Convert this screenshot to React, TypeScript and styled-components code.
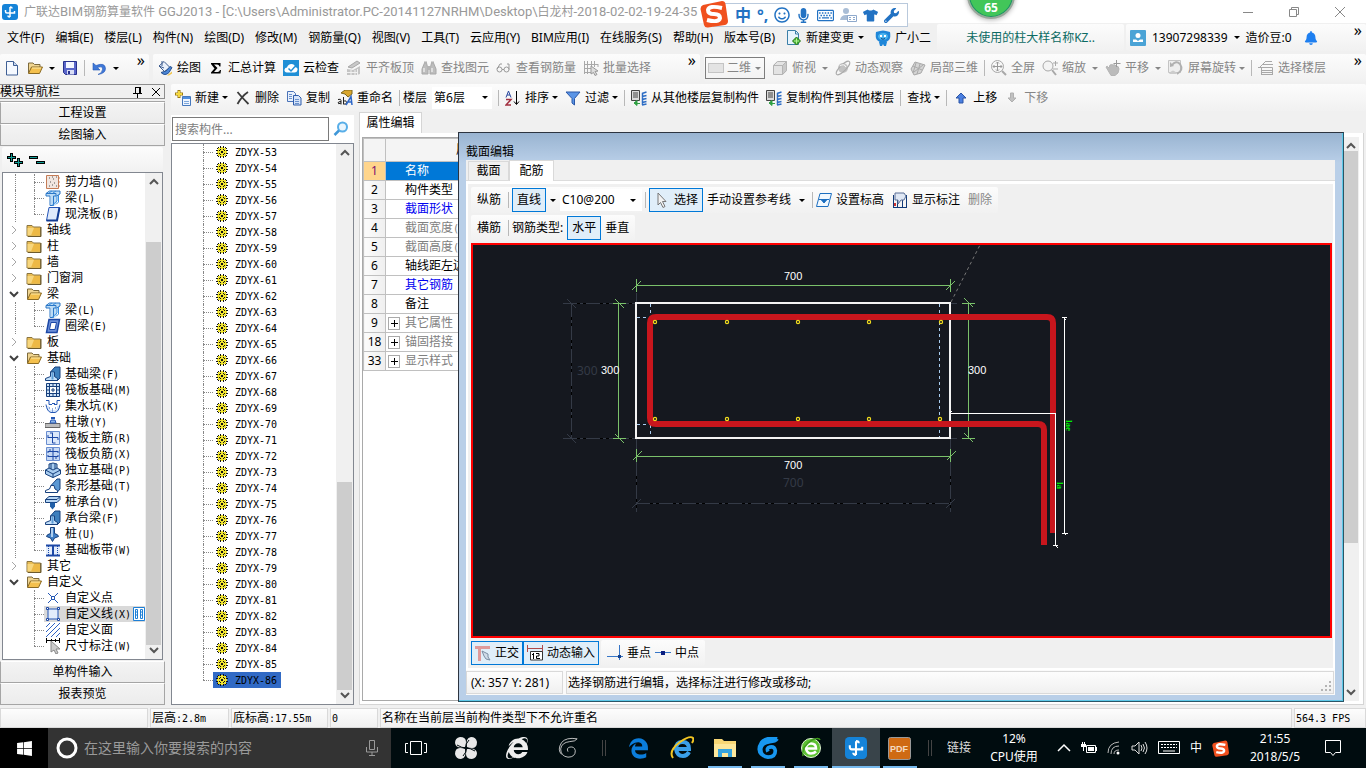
import React from "react";
import styled, { createGlobalStyle, css } from "styled-components";
import {
  FaBell,
  FaEdgeLegacy,
  FaInternetExplorer,
  FaMicrophone,
  FaRegKeyboard,
  FaRegSmile,
  FaTshirt,
  FaWindows,
  FaWrench,
} from "react-icons/fa";

const uiFont = `"Noto Sans", "Noto Sans CJK SC", sans-serif`;

const GlobalStyle = createGlobalStyle`
  * { box-sizing: border-box; }
  body { margin: 0; background: #f0f0f0; font: 12px/16px ${uiFont}; color: #000; }
  button, input, select { font: inherit; color: inherit; margin: 0; padding: 0; border: 0; border-radius: 0; background: none; }
  ul { list-style: none; margin: 0; padding: 0; }
  svg { display: block; flex: none; }
`;

/* ---------- icons ---------- */

const dark = "#17407d";
const gray = "#a8a8a8";
const sketch = { fill: "none", strokeWidth: 1 };

const icons: Record<string, React.ReactNode> = {
  folderClosed: (
    <>
      <path d="M1 3.500h5l1.500 1.500H14.500v9H1z" fill="#e9bd55" stroke="#8a7440" />
      <path d="M1.500 6h12.500v7.500H1.500z" fill="#f7d67d" />
      <path d="M8 6h6v7.500H5z" fill="#edb945" />
      <path d="M15 5v9.500H2" stroke="#6d5a2c" {...sketch} />
    </>
  ),
  folderOpen: (
    <>
      <path d="M1.500 13V3h4.500l1.500 1.500h5.500V7" fill="#f0d591" stroke="#7d6a3c" />
      <path d="M1.500 13.500L4.500 7h11l-3 6.500z" fill="#f4c04d" stroke="#8a6a24" />
      <path d="M5 8h9" stroke="#fde9a8" />
    </>
  ),
  beam: (
    <>
      <path d="M1 3.500L4 1h11v3l-3 2v8l-2 1.500H6V6H1z" fill="#bcdcf6" />
      <path d="M1 3.500h10V6H8.500v9.500H5V6H1zM1 3.500L4.500 1H15v3l-3.500 2" stroke="#2a76c6" {...sketch} />
      <path d="M7 15.500L12 11V5.500M4 3l3-2M8 3l3-2M11.500 14l2-2V5" stroke="#3b8fe0" {...sketch} />
    </>
  ),
  foundation: (
    <>
      <path d="M5.500 6L10 1h5v11l-3 3z" fill="#3d7fbd" stroke={dark} />
      <path d="M.5 14.500v-2l5-2V6h4v4.500l3 2v2z" fill="#c3e0fa" stroke={dark} />
      <path d="M7.500 6.500v7" stroke="#5d9cd6" strokeWidth={2} />
    </>
  ),
  app: (
    <>
      <rect width="16" height="16" rx="3" fill="#1583d8" />
      <path d="M8 3v10M3.500 6v1.500q0 1.500 1.500 1.500h7.500V7M10 4.500Q10 3 8 3M6 11.500Q6 13 8 13" fill="none" stroke="#fff" strokeWidth={1.500} />
    </>
  ),
  newDoc: (
    <>
      <path d="M2.500 1.500h7l4 4v9.500h-11z" fill="#f5f9ff" stroke="#3f5f94" />
      <path d="M9.500 1.500v4h4" stroke="#3f5f94" fill="#c9d8ef" />
    </>
  ),
  save: (
    <>
      <path d="M1.500 1.500h13v13h-11l-2-2z" fill="#5a66c9" stroke="#27308c" />
      <path d="M4 2h8v6H4z" fill="#f4f6ff" />
      <path d="M5 10h7v4.500H5z" fill="#d9def5" />
      <path d="M6 11h2v3H6z" fill="#27308c" />
    </>
  ),
  undo: <path d="M2 3v7h7L6.500 7.500Q12 5.500 11.500 9.500T7 14.500Q14.500 13.500 14.500 8.500 14 2 5 5.500z" fill="#3f78d8" stroke="#2458b5" strokeWidth={0.600} />,
  paint: (
    <>
      <path d="M2 6L7 1.500l6 6-5.500 4z" fill="#eaf1fb" stroke="#3d5c8f" />
      <path d="M5 1v5M2 6l5 2" stroke="#3d5c8f" {...sketch} />
      <path d="M4 12.500q4 4 8 0l3-5-2-1-4 4.500z" fill="#4a86d8" stroke="#28528f" />
      <path d="M10 15.500l5-4v2l-3 2z" fill="#f2c44b" />
    </>
  ),
  sigma: <path d="M3 3h9.500v3.500h-1Q11 4.500 9 4.500H6L9.500 8 6 12h3.500q2 0 2.500-2h1l-.5 3.500H3v-1L6.500 8.500 3 4z" fill="#000" />,
  cloudCheck: (
    <>
      <rect width="16" height="16" fill="#1f8fd6" />
      <path d="M4 12.500Q1 12 1.500 9.500 2 7.500 4 7.500 5 4 8.500 4q3 0 3.500 3 3 .5 2.500 3-.5 2.500-3 2.500z" fill="#fff" />
      <path d="M5.500 8.500l2.500 2.500 4-4.500" stroke="#1f8fd6" fill="none" strokeWidth={1.500} />
    </>
  ),
  alignTop: (
    <>
      <path d="M2 7l9-6 3 2-8 5z" fill="#c8c8c8" stroke={gray} />
      <path d="M1 9l6 1 7-4v8l-3 1H1z" fill="#c4c4c4" />
      <path d="M1 12.500h10M5 10v5M9 10v5M11.500 9v6" stroke="#f0f0f0" />
    </>
  ),
  binoculars: (
    <>
      <path d="M1 14V9l2.500-6h2L7 9v5zM9 14V9l1.500-6h2L15 9v5z" fill="#bdbdbd" stroke={gray} />
      <path d="M6 6h4v4H6zM3 1.500h3v2H3zM10 1.500h3v2h-3z" fill="#b4b4b4" />
      <path d="M3 8v4M11 8v4" stroke="#fff" />
    </>
  ),
  glasses: (
    <>
      <circle cx="3.500" cy="9.500" r="2.500" stroke="#999" {...sketch} />
      <circle cx="10.500" cy="9.500" r="2.500" stroke="#999" {...sketch} />
      <path d="M6 9.500h2M1 9l3-5h2M13 9.500V4h-2" stroke="#999" {...sketch} />
    </>
  ),
  batch: (
    <>
      <path d="M1.500 1v13M4.500 1v13M8.500 1v8M1 4.500h14M1 8.500h8M1 12.500h7M11.500 1v6M15 4v3" stroke={gray} {...sketch} />
      <path d="M8 6l7 5-3 .5 2 3-2 1-1.500-3L8 14z" fill="#ddd" stroke="#999" />
    </>
  ),
  flat: <rect x=".5" y="3.500" width="15" height="9" fill="#e3e3e3" stroke="#c4c4c4" />,
  cube: (
    <>
      <path d="M1 5l4-4h10v10l-4 4H1z" fill="#e3e3e3" />
      <path d="M10.500 5.500l4-4v9l-4 4z" fill="#c9c9c9" />
      <path d="M1.500 5.500h9v9h-9zM1.500 5.500l4-4h9l-4 4M14.500 1.500v9l-4 4" stroke="#b4b4b4" {...sketch} />
    </>
  ),
  orbit: (
    <>
      <circle cx="8" cy="8" r="5" fill="#c2c2c2" />
      <ellipse cx="8" cy="8" rx="9" ry="3" transform="rotate(-45 8 8)" stroke="#aaa" {...sketch} />
      <path d="M5 6q4-3 6 1" stroke="#fff" {...sketch} />
    </>
  ),
  partial3d: (
    <>
      <path d="M1 9l4-7 10 3-4 8-7 2z" fill="#d4d4d4" stroke={gray} />
      <path d="M3 6l9 4M6 3l-3 10M10 4L7 14M13 5L4 12" stroke="#aaa" {...sketch} />
    </>
  ),
  fullScreen: (
    <>
      <circle cx="6.500" cy="6.500" r="6" stroke={gray} {...sketch} />
      <path d="M6.500 2v9M2 6.500h9M5 3.500l1.500-1.500L8 3.500M5 9.500L6.500 11 8 9.500M3.500 5L2 6.500 3.500 8M9.500 5L11 6.500 9.500 8" stroke="#999" {...sketch} />
      <path d="M11 11l4 4" stroke={gray} strokeWidth={2} />
    </>
  ),
  zoom: (
    <>
      <circle cx="6" cy="6" r="5" fill="#f4f4f4" stroke={gray} />
      <path d="M10 10l4 5" stroke={gray} strokeWidth={2} />
      <path d="M11 3h5M13.500 1v5M11 9h5" stroke="#aaa" {...sketch} />
    </>
  ),
  hand: (
    <>
      <path d="M1 7q1-2 3 1l1-3q2-1 3 0 2-1 3 1 3 0 3 3l-1 4-3 2.500H6z" fill="#bbb" stroke="#b4b4b4" />
      <path d="M11.500 0v7M8.500 3.500h7" stroke="#999" {...sketch} />
    </>
  ),
  rotate: (
    <>
      <path d="M.5.5h12v12H.5z" fill="#eee" stroke="#c4c4c4" />
      <path d="M4 5q4-5 8-1 4 6-3 10" stroke="#b0b0b0" strokeWidth={2} fill="none" />
      <path d="M2 7V2l4 4z" fill="#b0b0b0" />
      <path d="M1 14q4-7 8 0z" fill="#ccc" />
    </>
  ),
  floors: <path d="M3.500 15V7.500h11V15M3 10.500h12M3 12.500h12M3 14.500h12M0 7.500h4M8 1.500h6M5 4.500h10M2 7l6-6" stroke={gray} {...sketch} />,
  plusDoc: (
    <>
      <path d="M4 0v8M0 4h8" stroke="#9b7a14" strokeWidth={3} />
      <path d="M4 1v6M1 4h6" stroke="#f4d73f" strokeWidth={2} />
      <path d="M7.500 6.500h8v9h-8z" fill="#eef5ff" stroke="#4678bd" />
      <path d="M8 7h7v2H8z" fill="#4f8ee0" />
      <path d="M9 11.500h5M9 13.500h5" stroke="#7fa8db" />
    </>
  ),
  cross: <path d="M2.500 2q4 5 11 12M13 2Q7 6 2.500 14" stroke="#3b3b3b" strokeWidth={1.800} fill="none" />,
  copy: (
    <>
      <path d="M1.500 1.500h6l2 2v8h-8z" fill="#e8f0fc" stroke="#4a73b8" />
      <path d="M7.500 5.500h5l2.500 2.500v7h-7.500z" fill="#d6e4fa" stroke="#2f5cab" />
      <path d="M3 4.500h3M3 6.500h3M3 8.500h3M9 9.500h4M9 11.500h4M9 13.500h4" stroke="#6a91cc" />
    </>
  ),
  rename: (
    <>
      <path d="M4 3l4-3h7v4l-4 3-3-3z" fill="#d9a72e" stroke="#7c651c" />
      <path d="M1 9.500q3-1 3 1v4M4 11.500q-3 0-3 1.500t3 0M6.500 7v7.500M7 11q2.500-1 2.500 1.500T7 14" stroke="#222" {...sketch} />
      <path d="M9 15L14 6.500l1 8.500M11 12h4" stroke="#2d66c7" fill="none" strokeWidth={1.500} />
    </>
  ),
  sort: (
    <>
      <path d="M1 7.500L3.500 1 6 7.500M2 5h3" stroke="#29489e" {...sketch} />
      <path d="M1 9.500h5L1 15h5" stroke="#a23040" fill="none" strokeWidth={1.500} />
      <path d="M11.500 1v13M9 11.500l2.500 3 2.500-3" stroke="#000" {...sketch} />
    </>
  ),
  filter: <path d="M1 2h14L9.500 8.500V15L7 13V8.500z" fill="#5a94e6" stroke="#2b58a8" />,
  copyFrom: (
    <>
      <path d="M.5.5h8v10h-8z" fill="#dcdcdc" stroke="#444" />
      <path d="M2 3h5M2 5h5M2 7h5" stroke="#444" />
      <path d="M3 13l3-2.500v5zM6 13.500h3" fill="#2fa043" stroke="#2fa043" />
      <path d="M11 3.500l4.500-1.500M11 6.500l4.500-1M11 9.500l4.500-1M11 12.500l4.500-1M11 15l4.500-1M11.500 3v12" stroke="#2c6cc4" fill="none" strokeWidth={1.500} />
    </>
  ),
  arrowUp: <path d="M8 3l5 5h-3v5H6V8H3z" fill="#4a7fe0" stroke="#2b55a5" />,
  arrowDown: <path d="M8 12L4 8h2.500V3h3v5H12z" fill="#c0c0c0" stroke="#b0b0b0" />,
  changeDoc: (
    <>
      <path d="M1.500.500h8l3 3V14.500h-11z" fill="#e8f4fd" stroke="#3b7fa8" />
      <path d="M9.500 1v3h3" stroke="#3b7fa8" {...sketch} />
      <path d="M10.500 7l4 4-4 4-4-4z" fill="#40b02c" stroke="#2b7a1d" />
      <path d="M10.500 8.500v5M8 11h5" stroke="#b8f29c" />
    </>
  ),
  mascot: (
    <>
      <path d="M1 2l4-1 3-.5 3 .5 4 1q1 5-1 8-3 3-6 3t-6-3Q0 7 1 2z" fill="#1f86d8" />
      <path d="M4 12l1 4h2l1-2 1 2h2l1-4z" fill="#1f86d8" />
      <ellipse cx="8" cy="6.500" rx="5" ry="3.500" fill="#49b4ef" />
      <path d="M5 5h2v2H5zM9 5h2v2H9z" fill="#fff" />
      <path d="M6 8.500q2 1.500 4 0" stroke="#0b4a86" {...sketch} />
    </>
  ),
  user: (
    <>
      <rect width="16" height="16" rx="1" fill="#4aa3d6" />
      <circle cx="8" cy="5.500" r="2.500" fill="#fff" />
      <path d="M3 12V9.500h3l2 1.500 2-1.500h3V12z" fill="#fff" />
    </>
  ),
  wall: (
    <>
      <path d="M1.500 1.500h12v13h-12z" fill="#f1e6e0" stroke="#c57b55" />
      <path d="M4 4h1M8 5h1M11 3h1M5 8h1M9 9h1M4 12h1M7 11h1M11 12h1M7 3h1" stroke="#555" />
      <path d="M13 4h2M13 8h2M13 12h2" stroke="#c57b55" />
    </>
  ),
  slab: (
    <>
      <path d="M4 1.500h10.500L12 14.500H1.500z" fill="#dfeafb" stroke="#2455b8" />
      <path d="M1.500 14.500H12L14.500 1.500" stroke="#123c94" fill="none" strokeWidth={2} />
    </>
  ),
  ringBeam: (
    <>
      <path d="M4 1.500h10.500L12 14.500H1.500z" fill="#6d90d8" stroke="#1c48a6" strokeWidth={1.500} />
      <path d="M6 4.500h5.500l-1.500 7H4.500z" fill="#fff" stroke="#1c48a6" />
    </>
  ),
  raft: (
    <>
      <path d="M1.500 1.500h13v13h-13z" fill="#cfe3f7" stroke={dark} />
      <path d="M4.500 4.500h7v7h-7z" fill="#fff" stroke={dark} />
      <path d="M1 4.500h14M1 11.500h14M4.500 1v14M11.500 1v14M8 1v3M8 12v3M1 8h3M12 8h3M8 6v4M6 8h4" stroke={dark} {...sketch} />
    </>
  ),
  pit: (
    <>
      <path d="M1 8h3v3q4 2 8 0V8h3q-1 6-5 6.500H6Q2 14 1 8z" fill="#d8e7fb" />
      <path d="M1 2.500h3v4h3M15 2.500h-3v4H9M1 6.500q1 7 5 8h4q4-1 5-8M7 5.500h3" stroke="#2457b4" {...sketch} />
      <path d="M4 10h1M7 11h1M10 10h1M7 13h1" stroke="#2457b4" />
    </>
  ),
  pier: (
    <>
      <path d="M0 9.500h15v4H0z" fill="#bcbcbc" stroke="#666" />
      <path d="M5 9l1-3h4l1 3z" fill="#8db6e8" stroke="#2457b4" />
      <path d="M6 5h4V3H6z" fill="#2457b4" />
    </>
  ),
  mainBar: (
    <>
      <path d="M1.500 1.500h13v13h-13z" fill="#dbe8fb" stroke="#6a8ed0" />
      <path d="M7.500 3v10M3 7.500h10M5 3h3M3 5v3M13 10V7.500M7.500 13h3" stroke="#1c48a6" {...sketch} />
    </>
  ),
  negBar: (
    <>
      <path d="M1.500 1.500h13v13h-13z" fill="#c6d9f5" stroke="#6a8ed0" />
      <path d="M3 5.500h10M3 10.500h10M3 5v2M13 5v2M3 9v2M13 9v2M8 2v12M5 3v3M11 10v3" stroke="#1c48a6" {...sketch} />
    </>
  ),
  isolated: (
    <>
      <path d="M0 8l4-2V2l4-1 4 1v4l4 2v4l-8 4-8-4z" fill="#a9cdf0" />
      <path d="M.5 8L4 6V2l4-1 4 1v4l3.500 2v4L8 15.500.5 12zM.5 8L8 12l7.500-4M8 12v3.500M4 6l4 2 4-2M6 2v5M10 2v5" stroke={dark} {...sketch} />
    </>
  ),
  strip: (
    <>
      <path d="M6 7.500L12 1h3v10l-3 3.500z" fill="#5b98d3" stroke={dark} />
      <path d="M.5 14.500v-2l4-1.500 1.500-3.500h3l1 3.500 2.500 1.500v2z" fill="#fff" stroke={dark} />
    </>
  ),
  pileCap: (
    <>
      <path d="M.5 5.500L4 2.500h11v3l-3 3H.5z" fill="#b7d6f4" stroke={dark} />
      <path d="M5 8.500h5v4l-2.500 3L5 12.500z" fill="#1f5fa8" />
      <path d="M.5 5.500H12l3-3" stroke={dark} {...sketch} />
    </>
  ),
  pile: (
    <>
      <path d="M5.500 1.500h4v6q4 1 4 3l-4 1.500-2 3.500-2-3.500-4-1.500q0-2 4-3z" fill="#3f7fc6" stroke={dark} />
      <path d="M7 2v9" stroke="#d7eafc" strokeWidth={1.500} />
    </>
  ),
  band: (
    <>
      <path d="M1 4h14v8H1z" fill="#e3edfb" />
      <path d="M1 3.500h14M1 13.500h14M8 4v9" stroke="#1c48a6" strokeWidth={2} fill="none" />
      <path d="M3.500 4v9M12.500 4v9" stroke="#1c48a6" strokeDasharray="1 1" {...sketch} />
    </>
  ),
  point: (
    <>
      <path d="M3 3l10 10M13 3L3 13" stroke="#2457b4" {...sketch} />
      <path d="M6.500 6.500h3v3h-3z" fill="#fff" stroke="#2457b4" />
    </>
  ),
  line: (
    <>
      <path d="M3 3h10v10H3z" fill="#e2ecfb" stroke="#2457b4" />
      <path d="M1.500 1.500h2v2h-2zM12.500 1.500h2v2h-2zM1.500 12.500h2v2h-2zM12.500 12.500h2v2h-2z" fill="#fff" stroke="#1c48a6" />
    </>
  ),
  area: <path d="M1 5l4-4M1 10l9-9M1 15L15 1M6 15l9-9M11 15l4-4" stroke="#2f63c4" {...sketch} />,
  dimension: (
    <>
      <path d="M1.500 0v5M14.500 0v5M1 2.500h14M6.500 1v3M10.500 1v3" stroke="#000" {...sketch} />
      <path d="M6 3l9 8h-4l2 4-2 1-2-4-3 2z" fill="#ccc" stroke="#888" />
    </>
  ),
  search: (
    <>
      <circle cx="9.500" cy="6" r="4.500" fill="#eaf6fe" stroke="#58aee8" strokeWidth={2} />
      <path d="M6 9.500L1.500 14" stroke="#3f97d8" strokeWidth={2.500} />
    </>
  ),
  gear: (
    <>
      <path d="M6 3h4v1h2v2h1v4h-1v2h-2v1H6v-1H4v-2H3V6h1V4h2z" fill="#f0e430" />
      <path
        d="M6 2h1v2H6zM9 2h1v2H9zM4 3h1v1H4zM11 3h1v1h-1zM3 4h1v1H3zM12 4h1v1h-1zM2 6h2v1H2zM12 6h2v1h-2zM2 9h2v1H2zM12 9h2v1h-2zM3 11h1v1H3zM12 11h1v1h-1zM4 12h1v1H4zM11 12h1v1h-1zM6 12h1v2H6zM9 12h1v2H9zM6 5h1v1H6zM9 5h1v1H9zM5 6h1v1H5zM10 6h1v1h-1zM5 9h1v1H5zM10 9h1v1h-1zM6 10h1v1H6zM9 10h1v1H9zM7 7h2v2H7z"
        fill="#111"
      />
    </>
  ),
  plusPlus: (
    <>
      <path d="M4.500 1v9M0 5.500h9M11.500 6v9M7 10.500h9" stroke="#000" strokeWidth={3} />
      <path d="M4.500 2v7M1 5.500h7M11.500 7v7M8 10.500h7" stroke="#0f9c94" />
    </>
  ),
  minusMinus: (
    <>
      <path d="M0 5.500h9M7 10.500h9" stroke="#000" strokeWidth={3} />
      <path d="M1 5.500h7M8 10.500h7" stroke="#0f9c94" />
    </>
  ),
  pin: <path d="M5.500 3v6M9.500 3v6M5 3.500h5M3 9.500h9M7.500 10v4M10.500 3v6" stroke="#000" {...sketch} />,
  close: <path d="M4 4l8 8M12 4l-8 8" stroke="#000" {...sketch} />,
  cursor: <path d="M4 1l8 8.500H8.500l2.500 5-2 1-2.500-5L4 13z" fill="#f2f2f2" stroke="#777" />,
  elevation: (
    <>
      <path d="M4 1.500h11.500L12 14.500H.5z" fill="#f2f9ff" stroke="#1d6fc0" />
      <path d="M3 7.500h10M5.500 8l2.500 3 2.500-3z" fill="#1d6fc0" stroke="#1d6fc0" />
    </>
  ),
  showLabel: (
    <>
      <path d="M1.500 3v12.500M14.500 3v12.500M5.500 8v7M10.500 8v7M1 15.500h14" stroke="#123a78" {...sketch} />
      <path d="M3 1h9l2 3-2 4H9l-3 4V8H3z" fill="#dfe7f4" stroke="#5a6f96" />
      <path d="M2 11h2v3H2z" fill="#c33" />
    </>
  ),
  ortho: (
    <>
      <path d="M0 2.500h15M4.500 2v14" stroke="#e09a9a" strokeWidth={3} />
      <path d="M7 6l6 3v3l2 3-4-1-2-3z" fill="#cfdbe8" stroke="#7b8da3" />
    </>
  ),
  dynInput: (
    <>
      <path d="M.5 0v7M15.500 0v7M1 3.500h15" stroke="#b04a4a" {...sketch} />
      <path d="M3.500 6.500h12v8.500h-12z" fill="#fff" stroke="#333" />
      <path d="M6.500 8v6M5 9.500h2M9 8.500h3v2.500H9.500v2.500H13" stroke="#000" {...sketch} />
    </>
  ),
  perp: (
    <>
      <path d="M0 11.500h16M12.500 0v15" stroke="#3676c8" {...sketch} />
      <path d="M11 10h3v3h-3z" fill="#15408a" />
    </>
  ),
  mid: (
    <>
      <path d="M0 7.500h16" stroke="#3676c8" {...sketch} />
      <path d="M6 6h4v4H6z" fill="#0b1f80" />
    </>
  ),
};

function Icon({ name, size = 16 }: { name: string; size?: number }) {
  return (
    <svg width={size} height={size} viewBox="0 0 16 16" aria-hidden="true">
      {icons[name]}
    </svg>
  );
}

const Caret = styled.i`
  width: 0;
  height: 0;
  flex: none;
  border: 3px solid transparent;
  border-top-color: currentColor;
  border-bottom: 0;
`;

const Chevron = ({ dir, color = "#555", weight = 2 }: { dir: "up" | "down" | "right"; color?: string; weight?: number }) => (
  <svg width="10" height="10" viewBox="0 0 10 10" aria-hidden="true">
    <path
      d={dir === "up" ? "M1 7l4-4 4 4" : dir === "down" ? "M1 3l4 4 4-4" : "M3 1l4 4-4 4"}
      fill="none"
      stroke={color}
      strokeWidth={weight}
    />
  </svg>
);

/* ---------- text with half-width latin letters ---------- */

const HalfWidth = styled.span`
  font-family: "DejaVu Sans Mono", monospace;
  font-size: 10px;
`;

function Song({ text }: { text: string }) {
  return (
    <span>
      {text.split(/([\x20-\x7e]+)/).map((part, i) => (i % 2 ? <HalfWidth key={i}>{part}</HalfWidth> : part))}
    </span>
  );
}

/* ---------- frame ---------- */

const Root = styled.div`
  position: relative;
  display: flex;
  flex-direction: column;
  min-height: 100vh;
  overflow: hidden;
  white-space: nowrap;
`;

const TitleBar = styled.header`
  display: flex;
  align-items: center;
  gap: 6px;
  height: 23px;
  padding: 0 20px 0 2px;
  background: #fff;
  color: #999;
`;

const TitleLatin = styled.span`
  font-family: Roboto, sans-serif;
  font-size: 13px;
`;

const WindowButtons = styled.div`
  display: flex;
  gap: 34px;
  margin-left: auto;
`;

const PlainButton = styled.button`
  display: flex;
  align-items: center;
  justify-content: center;
`;

const toolbarFill = css`
  background: linear-gradient(#fcfcfc, #f1f1f1);
  border-radius: 2px;
`;

const MenuRow = styled.div`
  display: flex;
  align-items: center;
  height: 29px;
`;

const Menus = styled.nav`
  display: flex;
  align-items: center;
  gap: 11px;
  width: 937px;
  padding-left: 7px;
`;

const MenuButton = styled.button`
  display: flex;
  align-items: center;
  gap: 4px;
`;

const NoticeBar = styled.div`
  ${toolbarFill}
  display: flex;
  align-items: center;
  justify-content: center;
  width: 187px;
  height: 27px;
  margin-right: 2px;
  color: #0c6b63;
`;

const AccountBar = styled.div`
  ${toolbarFill}
  display: flex;
  align-items: center;
  flex: 1;
  gap: 6px;
  height: 27px;
  padding: 0 4px;
`;

const ToolRow = styled.div`
  display: flex;
  gap: 4px;
  padding-top: 2px;
  height: 32px;
`;

const Toolbar = styled.div<{ $width?: number; $pad?: number }>`
  ${toolbarFill}
  display: flex;
  align-items: center;
  gap: 7px;
  height: 28px;
  padding: 0 4px 0 ${(p) => p.$pad ?? 4}px;
  ${(p) => (p.$width ? `width: ${p.$width}px;` : "flex: 1;")}
`;

const ComponentTools = styled.div`
  ${toolbarFill}
  display: flex;
  align-items: center;
  gap: 7px;
  height: 27px;
  padding-left: 4px;
`;

const ToolButton = styled.button<{ $off?: boolean; $tight?: boolean }>`
  display: flex;
  align-items: center;
  gap: 4px;
  color: ${(p) => (p.$off ? "#868686" : "#000")};
  ${Caret} {
    margin-left: ${(p) => (p.$tight ? -1 : 2)}px;
  }
`;

const Rule = styled.i`
  width: 1px;
  height: 16px;
  margin: 0 -1px;
  background: #b8b8b8;
`;

const More = styled.button`
  align-self: flex-start;
  margin-left: auto;
  font-size: 16px;
  line-height: 12px;
`;

const Combo = styled.label<{ $width: number; $boxed?: boolean }>`
  display: flex;
  align-items: center;
  gap: ${(p) => (p.$boxed ? 3 : 4)}px;
  width: ${(p) => p.$width}px;
  height: 22px;
  padding: ${(p) => (p.$boxed ? "0 3px 0 2px" : "0 6px 0 2px")};
  background: ${(p) => (p.$boxed ? "transparent" : "#fff")};
  border: ${(p) => (p.$boxed ? "1px solid #7d7d7d" : "0")};
  color: ${(p) => (p.$boxed ? "#868686" : "#000")};
  select {
    appearance: none;
    flex: 1;
    min-width: 0;
  }
`;

const FloorField = styled.label`
  display: flex;
  align-items: center;
  gap: 5px;
  margin-left: -3px;
`;

const FloorCombo = styled.span`
  display: flex;
  align-items: center;
  width: 60px;
  height: 22px;
  padding: 0 4px 0 2px;
  background: #fff;
  select {
    appearance: none;
    flex: 1;
    min-width: 0;
  }
`;

const Workspace = styled.main`
  display: flex;
  flex: 1;
`;

/* ---------- left navigation ---------- */

const NavPanel = styled.aside`
  display: flex;
  flex-direction: column;
  width: 165px;
  padding-bottom: 3px;
`;

const NavCaption = styled.div`
  display: flex;
  align-items: center;
  gap: 2px;
  height: 15px;
  border: 1px solid #8d8d8d;
  border-left: 0;
  span {
    flex: 1;
  }
`;

const NavButton = styled.button`
  flex: none;
  height: 22px;
  border: 1px solid #a5a5a5;
  border-top-color: #fff;
  background: linear-gradient(#f3f3f3, #ececec);
`;

const NavTop = styled.div`
  display: flex;
  flex-direction: column;
  margin-top: 2px;
  border-top: 1px solid #a5a5a5;
`;

const NavTools = styled.div`
  ${toolbarFill}
  display: flex;
  align-items: center;
  gap: 6px;
  height: 25px;
  margin: 1px 2px 0;
  padding-left: 5px;
`;

const Scroller = styled.div`
  display: flex;
  flex: 1;
  overflow: hidden;
  border: 1px solid #828790;
  background: #fff;
`;

const NavScroller = styled(Scroller)`
  margin: 0 2px 1px;
`;

const ScrollTrack = styled.div`
  display: flex;
  flex-direction: column;
  align-items: center;
  width: 17px;
  padding: 4px 0;
  background: #f0f0f0;
`;

const ScrollThumb = styled.div<{ $size: number }>`
  width: 15px;
  flex: ${(p) => p.$size} 0 0;
  background: #cdcdcd;
`;

const ScrollSpace = styled.div<{ $size: number }>`
  flex: ${(p) => p.$size} 0 0;
`;

function ScrollBar({ before, size, after }: { before: number; size: number; after: number }) {
  return (
    <ScrollTrack>
      <Chevron dir="up" />
      <ScrollSpace $size={before} />
      <ScrollThumb $size={size} />
      <ScrollSpace $size={after} />
      <Chevron dir="down" />
    </ScrollTrack>
  );
}

const Tree = styled.ul`
  flex: 1;
  padding-top: 1px;
  overflow: hidden;
`;

const Group = styled.li`
  display: flex;
  align-items: center;
  height: 16px;
  padding-left: 6px;
  gap: 5px;
  svg:first-child {
    margin-right: 2px;
  }
`;

const Guide = styled.i<{ $last?: boolean }>`
  position: relative;
  width: 10px;
  height: 16px;
  &::before {
    content: "";
    position: absolute;
    left: 0;
    top: 0;
    height: ${(p) => (p.$last ? 8 : 16)}px;
    border-left: 1px dotted #888;
  }
  &::after {
    content: "";
    position: absolute;
    left: 0;
    top: 8px;
    width: 10px;
    border-top: 1px dotted #888;
  }
`;

const Leaf = styled.li<{ $rail?: boolean }>`
  display: flex;
  align-items: center;
  height: 16px;
  margin-left: 12px;
  padding-left: 18px;
  border-left: 1px dotted ${(p) => (p.$rail ? "#888" : "transparent")};
`;

const LeafLabel = styled.span<{ $on?: boolean }>`
  display: flex;
  align-items: center;
  gap: 4px;
  height: 16px;
  padding-left: 1px;
  background: ${(p) => (p.$on ? "#d9d9d9" : "none")};
`;

const MiniBook = styled.svg`
  margin-left: -2px;
`;

type TreeNode = { t: string; icon?: string; open?: boolean; last?: boolean; rail?: boolean; on?: boolean };

const tree: TreeNode[] = [
  { t: "剪力墙(Q)", icon: "wall", rail: true },
  { t: "梁(L)", icon: "beam", rail: true },
  { t: "现浇板(B)", icon: "slab", rail: true, last: true },
  { t: "轴线" },
  { t: "柱" },
  { t: "墙" },
  { t: "门窗洞" },
  { t: "梁", open: true },
  { t: "梁(L)", icon: "beam", rail: true },
  { t: "圈梁(E)", icon: "ringBeam", rail: true, last: true },
  { t: "板" },
  { t: "基础", open: true },
  { t: "基础梁(F)", icon: "foundation", rail: true },
  { t: "筏板基础(M)", icon: "raft", rail: true },
  { t: "集水坑(K)", icon: "pit", rail: true },
  { t: "柱墩(Y)", icon: "pier", rail: true },
  { t: "筏板主筋(R)", icon: "mainBar", rail: true },
  { t: "筏板负筋(X)", icon: "negBar", rail: true },
  { t: "独立基础(P)", icon: "isolated", rail: true },
  { t: "条形基础(T)", icon: "strip", rail: true },
  { t: "桩承台(V)", icon: "pileCap", rail: true },
  { t: "承台梁(F)", icon: "foundation", rail: true },
  { t: "桩(U)", icon: "pile", rail: true },
  { t: "基础板带(W)", icon: "band", rail: true, last: true },
  { t: "其它" },
  { t: "自定义", open: true },
  { t: "自定义点", icon: "point" },
  { t: "自定义线(X)", icon: "line", on: true },
  { t: "自定义面", icon: "area" },
  { t: "尺寸标注(W)", icon: "dimension", last: true },
];

function Navigation() {
  return (
    <NavPanel>
      <NavCaption>
        <span>模块导航栏</span>
        <PlainButton aria-label="固定"><Icon name="pin" /></PlainButton>
        <PlainButton aria-label="关闭"><Icon name="close" /></PlainButton>
      </NavCaption>
      <NavTop>
        <NavButton>工程设置</NavButton>
        <NavButton>绘图输入</NavButton>
      </NavTop>
      <NavTools>
        <PlainButton aria-label="全部展开"><Icon name="plusPlus" /></PlainButton>
        <PlainButton aria-label="全部折叠"><Icon name="minusMinus" /></PlainButton>
      </NavTools>
      <NavScroller>
        <Tree>
          {tree.map((n, i) =>
            n.icon ? (
              <Leaf key={i} $rail={n.rail}>
                <Guide $last={n.last} />
                <LeafLabel $on={n.on}>
                  <Icon name={n.icon} />
                  <Song text={n.t} />
                  {n.on && (
                    <MiniBook width="12" height="14" viewBox="0 0 12 14">
                      <path d="M.5.5h11v13H.5z" fill="#fff" stroke="#1d7fd6" />
                      <path d="M2.500 2.500h2v9h-2zM7.500 2.500h2v9h-2zM3 5h2M3 8h2M7 5h2M7 8h2" stroke="#1d7fd6" fill="none" />
                    </MiniBook>
                  )}
                </LeafLabel>
              </Leaf>
            ) : (
              <Group key={i}>
                <Chevron dir={n.open ? "down" : "right"} color={n.open ? "#404040" : "#a6a6a6"} weight={n.open ? 2 : 1} />
                <Icon name={n.open ? "folderOpen" : "folderClosed"} />
                <Song text={n.t} />
              </Group>
            )
          )}
        </Tree>
        <ScrollBar before={54} size={397} after={0} />
      </NavScroller>
      <NavButton>单构件输入</NavButton>
      <NavButton>报表预览</NavButton>
    </NavPanel>
  );
}

/* ---------- component list ---------- */

const RightSide = styled.div`
  display: flex;
  flex: 1;
  flex-direction: column;
  padding-left: 6px;
`;

const Columns = styled.div`
  display: flex;
  flex: 1;
  padding: 4px 0 3px;
`;

const ListPanel = styled.section`
  display: flex;
  flex-direction: column;
  width: 183px;
`;

const SearchRow = styled.div`
  display: flex;
  align-items: center;
  gap: 4px;
  height: 28px;
  padding: 0 5px 0 1px;
  background: #fff;
  input {
    flex: 1;
    min-width: 0;
    height: 24px;
    padding: 0 2px;
    border: 1px solid #7a7a7a;
    outline: 0;
  }
  input::placeholder {
    color: #808080;
    opacity: 1;
  }
`;

const Items = styled.ul`
  flex: 1;
  padding-left: 31px;
`;

const Item = styled.li<{ $on?: boolean }>`
  display: flex;
  align-items: center;
  height: 16px;
  > span {
    display: flex;
    align-items: center;
    gap: 5px;
    height: 16px;
    padding: 0 4px 0 1px;
    background: ${(p) => (p.$on ? "#316ac5" : "none")};
  }
`;

const numbers = Array.from({ length: 34 }, (_, i) => 53 + i);

function ComponentList() {
  return (
    <ListPanel>
      <SearchRow>
        <input aria-label="搜索构件" placeholder="搜索构件..." />
        <PlainButton aria-label="搜索"><Icon name="search" /></PlainButton>
      </SearchRow>
      <Scroller>
        <Items>
          {numbers.map((n) => (
            <Item key={n} $on={n === 86}>
              <Guide $last={n === 86} />
              <span>
                <Icon name="gear" />
                <Song text={`ZDYX-${n}`} />
              </span>
            </Item>
          ))}
        </Items>
        <ScrollBar before={320} size={205} after={0} />
      </Scroller>
    </ListPanel>
  );
}

/* ---------- properties ---------- */

const PropertyPanel = styled.section`
  position: relative;
  display: flex;
  flex: 1;
  flex-direction: column;
  margin: -3px 0 0 5px;
`;

const PropertyTab = styled.button`
  width: 63px;
  height: 21px;
  background: #fff;
  border: 1px solid #d5d5d5;
  border-bottom: 0;
`;

const PropertyBody = styled.div`
  display: flex;
  flex: 1;
  padding: 4px 4px 3px 2px;
  margin-right: 2px;
  background: #fff;
  border: 1px solid #d5d5d5;
  border-top: 0;
`;

const GridFrame = styled.div`
  flex: 1;
  border: 1px solid #a9a9a9;
  border-right: 0;
`;

const Grid = styled.table`
  table-layout: fixed;
  border-collapse: collapse;
  width: 212px;
  th {
    height: 23px;
    padding: 0;
    background: #f4f4f4;
    font-weight: normal;
  }
  th,
  td {
    border: 1px solid #c0c0c0;
  }
`;

const NumHead = styled.th`
  width: 22px;
`;

const NumCell = styled.td<{ $on?: boolean }>`
  height: 19px;
  padding: 0;
  text-align: center;
  color: ${(p) => (p.$on ? "#7a1070" : "#000")};
  background: ${(p) => (p.$on ? "#ffd58c" : "linear-gradient(90deg, #fcfcfc, #efefef)")};
`;

const NameCell = styled.td<{ $tone?: string; $on?: boolean }>`
  padding: 0;
  color: ${(p) => p.$tone ?? "#000"};
  background: ${(p) => (p.$on ? "#0078d7" : "#fff")};
  > div {
    display: flex;
    align-items: center;
    gap: 5px;
    padding-left: 2px;
    overflow: hidden;
  }
`;

const Expander = styled.button`
  display: flex;
  align-items: center;
  justify-content: center;
  width: 12px;
  height: 13px;
  border: 1px solid #aaa;
  color: #000;
`;

const Indent = styled.i`
  width: 12px;
`;

const properties: { n: number; t: string; tone?: string; more?: boolean }[] = [
  { n: 1, t: "名称", tone: "#fff" },
  { n: 2, t: "构件类型" },
  { n: 3, t: "截面形状", tone: "#0000f0" },
  { n: 4, t: "截面宽度(", tone: "#808080" },
  { n: 5, t: "截面高度(", tone: "#808080" },
  { n: 6, t: "轴线距左边" },
  { n: 7, t: "其它钢筋", tone: "#0000f0" },
  { n: 8, t: "备注" },
  { n: 9, t: "其它属性", tone: "#808080", more: true },
  { n: 18, t: "锚固搭接", tone: "#808080", more: true },
  { n: 33, t: "显示样式", tone: "#808080", more: true },
];

function Properties() {
  return (
    <PropertyPanel>
      <PropertyTab>属性编辑</PropertyTab>
      <PropertyBody>
        <GridFrame>
          <Grid>
            <thead>
              <tr>
                <NumHead />
                <th>属性名称</th>
              </tr>
            </thead>
            <tbody>
              {properties.map((p) => (
                <tr key={p.n}>
                  <NumCell $on={p.n === 1}>{p.n}</NumCell>
                  <NameCell $tone={p.tone} $on={p.n === 1}>
                    <div>
                      {p.more ? (
                        <Expander aria-label="展开">
                          <svg width="7" height="7"><path d="M3.500 0v7M0 3.500h7" stroke="#000" /></svg>
                        </Expander>
                      ) : (
                        <Indent />
                      )}
                      <Song text={p.t} />
                    </div>
                  </NameCell>
                </tr>
              ))}
            </tbody>
          </Grid>
        </GridFrame>
        <ScrollBar before={0} size={385} after={142} />
      </PropertyBody>
      <SectionDialog />
    </PropertyPanel>
  );
}

/* ---------- section dialog ---------- */

const Dialog = styled.section`
  position: absolute;
  top: 20px;
  right: 22px;
  bottom: 3px;
  left: 99px;
  display: flex;
  flex-direction: column;
  padding: 0 8px 7px 7px;
  background: linear-gradient(#99b4d1, #b9cfe8 30px);
  border: 1px solid #2c3440;
  border-right-color: #2b5566;
  border-bottom-color: #2b5566;
  box-shadow: inset -1px -1px #5cc8e8;
`;

const DialogTitle = styled.h2`
  margin: 0;
  height: 32px;
  padding-top: 11px;
  font-size: 12px;
  line-height: 16px;
  font-weight: normal;
`;

const DialogBody = styled.div`
  display: flex;
  flex: 1;
  flex-direction: column;
  background: #f0f0f0;
`;

const Tabs = styled.div`
  display: flex;
  align-items: flex-end;
  height: 21px;
  padding-left: 2px;
  border-bottom: 1px solid #dcdcdc;
`;

const Tab = styled.button<{ $on?: boolean }>`
  width: ${(p) => (p.$on ? 45 : 41)}px;
  height: ${(p) => (p.$on ? 21 : 19)}px;
  margin-bottom: ${(p) => (p.$on ? -1 : 0)}px;
  border: 1px solid #d9d9d9;
  border-bottom: 0;
  background: ${(p) => (p.$on ? "#fff" : "#f0f0f0")};
`;

const DialogPage = styled.div`
  display: flex;
  flex: 1;
  flex-direction: column;
  padding: 3px 1px 3px 3px;
  border: 2px solid #fff;
  border-top-width: 3px;
`;

const StripRow = styled.div`
  display: flex;
  height: 26px;
  margin-bottom: 2px;
`;

const Strip = styled.div`
  ${toolbarFill}
  display: flex;
  align-items: center;
  padding: 0 6px;
  gap: 4px;
  height: 26px;
`;

const Gap = styled.i`
  width: 0;
`;

const Toggle = styled.button`
  display: flex;
  align-items: center;
  gap: 4px;
  height: 24px;
  padding: 0 4px;
  border: 1px solid #0078d7;
  background: #e0eef9;
`;

const Canvas = styled.div`
  display: flex;
  flex: 1;
  min-height: 0;
  overflow: hidden;
  background: #15181f;
  border: 2px solid #f00;
`;

const SnapRow = styled.div`
  display: flex;
  align-items: center;
  gap: 2px;
  margin-top: 2px;
  height: 25px;
`;

const ToggleGroup = styled.div`
  display: flex;
  ${Toggle} {
    padding: 0 3px;
  }
`;

const DialogStatus = styled.div`
  display: flex;
  gap: 3px;
  height: 25px;
  padding: 1px 1px 1px 0;
  background: #fafafa;
`;

const StatusCell = styled.div<{ $width?: number; $pad?: number }>`
  display: flex;
  align-items: center;
  ${(p) => (p.$width ? `width: ${p.$width}px;` : "flex: 1;")}
  padding-left: ${(p) => p.$pad ?? 1}px;
  border: 1px solid #d9d9d9;
  background: linear-gradient(#fdfdfd, #f0f0f0);
`;

const Grip = styled.svg`
  margin: auto 1px 1px auto;
`;

const lime = "#7ac16a";
const faint = "#343a46";

function Drawing() {
  const barX = [655, 727, 798, 869, 941];
  return (
    <svg width="857" height="391" viewBox="473 246 857 391" role="img" aria-label="截面配筋图">
      <g fill="none" stroke="#000">
        <path d="M563 304.500h72M563 439.500h72M571.500 304v136M636.500 294v10M636.500 440v73M950.500 440v73M636 504.500h315M951 304.500h6M951 439.500h6" />
        <path stroke={faint} strokeDasharray="14 3 3 3" d="M563 304.500h72M563 439.500h72M571.500 304v136M636.500 294v10M636.500 440v73M950.500 440v73M636 504.500h315M951 304.500h6M951 439.500h6" />
        <path stroke={faint} d="M567 300l9 9M567 435l9 9M632 509l9-9M946 509l9-9" />
        <path stroke="#777" strokeDasharray="3 3" d="M951 303L980 246" />
      </g>
      <g fill="none" stroke={lime}>
        <path d="M636 286.500h315M636.500 280v13M950.500 280v13M636 457.500h315M636.500 450v13M950.500 450v13M618.500 304v136M613 304.500h13M613 439.500h13M968.500 304v136M962 304.500h13M962 439.500h13" />
        <path d="M632 291l9-9M946 291l9-9M633 461l9-9M947 461l9-9M615 300l9 9M615 435l9 9M964 299l9 9M964 434l9 9" />
      </g>
      <rect x="636" y="304" width="314" height="135" fill="none" stroke="#f4f4f4" strokeWidth={2} />
      <path d="M650.500 305v14M637 318.500h13M637 425.500h13M650.500 426v12M939.500 305v133" fill="none" stroke="#a9cdf0" strokeDasharray="3 3" />
      <path
        d="M1053 534V324Q1053 318 1047 318H656Q650 318 650 324V419Q650 425 656 425H1038Q1044 425 1044 431V546"
        fill="none"
        stroke="#c8161d"
        strokeWidth={6}
      />
      <g fill="#15181f" stroke="#f2dc1e" strokeWidth={1.200}>
        {barX.map((x) => (
          <React.Fragment key={x}>
            <circle cx={x} cy={323} r={1.600} />
            <circle cx={x === 941 ? 940 : x} cy={420} r={1.600} />
          </React.Fragment>
        ))}
      </g>
      <path
        d="M951 414.500h105M1055.500 414v133M1064.500 318v217M1053 546.500h5M1062 534.500h6M1062 318.500h5M952 412l-2 2M1064 319l2 2M1066 536l-1-1M1058 549l-2-2"
        fill="none"
        stroke="#fff"
      />
      <g fontFamily="Liberation Sans, sans-serif" fontSize="11" fill="#fff">
        <text x="784" y="281">700</text>
        <text x="784" y="470">700</text>
        <text x="601" y="375">300</text>
        <text x="968" y="375">300</text>
      </g>
      <g fontFamily="Noto Sans, sans-serif" fontSize="12" fill={faint}>
        <text x="783" y="488">700</text>
        <text x="577" y="376">300</text>
      </g>
      <g fontFamily="Liberation Serif, serif" fontSize="9" fontWeight="bold" fill="#00f000">
        <text transform="translate(1066 421) rotate(90)">lae</text>
        <text transform="translate(1057 483) rotate(90)">la</text>
      </g>
    </svg>
  );
}

function SectionDialog() {
  return (
    <Dialog>
      <DialogTitle>截面编辑</DialogTitle>
      <DialogBody>
        <Tabs>
          <Tab>截面</Tab>
          <Tab $on>配筋</Tab>
        </Tabs>
        <DialogPage>
          <StripRow>
            <Strip>
              <ToolButton>纵筋</ToolButton>
              <Gap />
              <Rule />
              <Toggle>直线</Toggle>
              <Caret />
              <Combo $width={82}>
                <select aria-label="钢筋规格"><option>C10@200</option></select>
                <Caret />
              </Combo>
              <Rule />
              <Toggle><Icon name="cursor" />选择</Toggle>
              <ToolButton>手动设置参考线</ToolButton>
              <Gap />
              <Caret />
              <Gap />
              <Rule />
              <ToolButton><Icon name="elevation" />设置标高</ToolButton>
              <Gap />
              <ToolButton><Icon name="showLabel" />显示标注</ToolButton>
              <Gap />
              <ToolButton $off>删除</ToolButton>
            </Strip>
          </StripRow>
          <StripRow>
            <Strip>
              <ToolButton>横筋</ToolButton>
              <Gap />
              <Rule />
              <span>钢筋类型:</span>
              <Toggle>水平</Toggle>
              <ToolButton>垂直</ToolButton>
            </Strip>
          </StripRow>
          <Canvas>
            <Drawing />
          </Canvas>
          <SnapRow>
            <ToggleGroup>
              <Toggle><Icon name="ortho" />正交</Toggle>
              <Toggle><Icon name="dynInput" />动态输入</Toggle>
            </ToggleGroup>
            <Strip>
              <ToolButton><Icon name="perp" />垂点</ToolButton>
              <ToolButton><Icon name="mid" />中点</ToolButton>
            </Strip>
          </SnapRow>
        </DialogPage>
        <DialogStatus>
          <StatusCell $width={97} $pad={4}>(X: 357 Y: 281)</StatusCell>
          <StatusCell>
            选择钢筋进行编辑，选择标注进行修改或移动;
            <Grip width="11" height="11">
              <path d="M8 0h2v2H8zM4 4h2v2H4zM8 4h2v2H8zM0 8h2v2H0zM4 8h2v2H4zM8 8h2v2H8z" fill="#b4b4b4" />
            </Grip>
          </StatusCell>
        </DialogStatus>
      </DialogBody>
    </Dialog>
  );
}

/* ---------- overlays ---------- */

const ImeBar = styled.div`
  position: absolute;
  top: 3px;
  left: 713px;
  display: flex;
  align-items: center;
  gap: 6px;
  width: 195px;
  height: 24px;
  padding-left: 21px;
  background: #fff;
  border: 1px solid #b9c9dc;
  color: #2272c3;
  font-size: 16px;
  font-weight: bold;
`;

const ImeLogo = styled.div`
  position: absolute;
  top: 0;
  left: 700px;
`;

const Badge = styled.div`
  position: absolute;
  top: -29px;
  left: 967px;
  display: flex;
  align-items: flex-end;
  justify-content: center;
  width: 48px;
  height: 48px;
  padding-bottom: 1px;
  border: 2px solid #9aa79c;
  border-radius: 50%;
  background: #42c659;
  box-shadow: 0 1px 5px rgba(0, 0, 0, 0.3), inset 0 0 0 1px #1d8f6a;
  color: #fff;
  font-weight: bold;
`;

const SogouLogo = ({ size }: { size: number }) => (
  <svg width={size} height={size} viewBox="0 0 28 28" aria-hidden="true">
    <path d="M3 5L22 1q3 0 3.500 3L28 21q0 3-3 4L8 27.500Q5 28 4 25L.5 9Q.5 6 3 5z" fill="#f0501e" />
    <path d="M22 8Q9 5 8 10q0 4 6 4t6 4q-1 5-13 2" fill="none" stroke="#fff" strokeWidth={4} />
  </svg>
);

/* ---------- bottom bars ---------- */

const StatusBar = styled.footer`
  display: flex;
  gap: 2px;
  height: 20px;
`;

const Taskbar = styled.footer`
  display: flex;
  align-items: center;
  height: 40px;
  background: #000c0f;
  color: #fff;
`;

const StartButton = styled(PlainButton)`
  flex: none;
  width: 48px;
  height: 40px;
  background: #000;
`;

const TaskSearch = styled.label`
  display: flex;
  flex: none;
  align-items: center;
  gap: 6px;
  width: 343px;
  height: 40px;
  padding: 0 12px 0 8px;
  background: #333;
  color: #9a9a9a;
  font-size: 14px;
  input {
    flex: 1;
    min-width: 0;
    outline: 0;
  }
  input::placeholder {
    color: #9a9a9a;
    opacity: 1;
  }
`;

const TaskButton = styled.button<{ $width?: number; $run?: boolean; $on?: boolean }>`
  display: flex;
  flex: none;
  align-items: center;
  justify-content: center;
  width: ${(p) => p.$width ?? 43}px;
  height: 40px;
  background-color: ${(p) => (p.$on ? "#39444a" : "transparent")};
  background-image: ${(p) => (p.$run ? "linear-gradient(#76b9ed, #76b9ed)" : "none")};
  background-size: ${(p) => (p.$on ? "100% 2px" : "34px 2px")};
  background-position: bottom center;
  background-repeat: no-repeat;
`;

const TaskDivider = styled.i`
  flex: none;
  width: 4px;
  height: 16px;
  border: solid #444;
  border-width: 0 1px;
`;

const DividerSlot = styled.div`
  display: flex;
  flex: none;
  justify-content: center;
  width: 22px;
`;

const Tray = styled.div`
  display: flex;
  align-items: center;
  gap: 10px;
  margin-left: auto;
`;

const TwoLines = styled.div<{ $width: number }>`
  width: ${(p) => p.$width}px;
  text-align: center;
  line-height: 18px;
`;

const Shortcuts = styled.span`
  color: #ddd;
`;

const Swirl = ({ color, width = 3 }: { color: string; width?: number }) => (
  <svg width="22" height="22" viewBox="0 0 24 24" aria-hidden="true">
    <path
      d="M22 2Q20 5 14 5 5 6 4 13q0 8 8 9 8 0 8-7-1-5-6-4-4 1-2 5M22 2Q10 0 5 6 0 14 5 19"
      fill="none"
      stroke={color}
      strokeWidth={width}
    />
  </svg>
);

function BottomBars() {
  return (
    <>
      <StatusBar>
        <StatusCell $width={148} />
        <StatusCell $width={79}><Song text="层高:2.8m" /></StatusCell>
        <StatusCell $width={97}><Song text="底标高:17.55m" /></StatusCell>
        <StatusCell $width={48}><Song text="0" /></StatusCell>
        <StatusCell>名称在当前层当前构件类型下不允许重名</StatusCell>
        <StatusCell $width={72}><Song text="564.3 FPS" /></StatusCell>
      </StatusBar>
      <Taskbar>
        <StartButton aria-label="开始"><FaWindows size={17} /></StartButton>
        <TaskSearch>
          <svg width="22" height="22"><circle cx="11" cy="11" r="9" fill="none" stroke="#fff" strokeWidth={3} /></svg>
          <input aria-label="搜索" placeholder="在这里输入你要搜索的内容" />
          <svg width="14" height="18" viewBox="0 0 14 18">
            <path d="M4.500 1.500h5v9h-5zM1.500 8v5h11V8M7 13v4M4 16.500h6" fill="none" stroke="#9a9a9a" />
          </svg>
        </TaskSearch>
        <TaskButton $width={50} aria-label="任务视图">
          <svg width="22" height="16"><path d="M5.500 1.500h11v13h-11zM3 3.500H.5v9H3M19 3.500h2.500v9H19" fill="none" stroke="#fff" /></svg>
        </TaskButton>
        <TaskButton $width={50} aria-label="四叶">
          <svg width="22" height="22" viewBox="0 0 22 22">
            <path d="M10 10Q1 12 0 6 0 1 5 0q6 0 6 5 0 3-1 5zM12 10Q10 1 16 0q5 0 6 5 0 6-5 6-3 0-5-1zM12 12q9-2 10 4 0 5-5 6-6 0-6-5 0-3 1-5zM10 12q2 9-4 10-5 0-6-5 0-6 5-6 3 0 5 1z" fill="#e8e8e8" />
            <path d="M2 8q5 3 9 3-1-4 3-8M20 14q-5-3-9-3 1 4-3 8" fill="none" stroke="#000c0f" />
          </svg>
        </TaskButton>
        <TaskButton $width={52} aria-label="浏览器"><FaInternetExplorer size={22} color="#eee" /></TaskButton>
        <TaskButton $width={50} aria-label="漩涡"><Swirl color="#ccc" width={1} /></TaskButton>
        <DividerSlot><TaskDivider /></DividerSlot>
        <TaskButton $width={46} aria-label="Edge"><FaEdgeLegacy size={21} color="#0b7ddb" /></TaskButton>
        <TaskButton $width={42} aria-label="IE">
          <svg width="24" height="24" viewBox="0 0 24 24">
            <path d="M6 13h13q0-7-6.500-7T6 13q1 7 7 7 4 0 6-4" fill="none" stroke="#3a9fe8" strokeWidth={4} />
            <path d="M3 22Q-2 15 10 6q10-7 13-4 1 2-1 5" fill="none" stroke="#f3c623" strokeWidth={2} />
          </svg>
        </TaskButton>
        <TaskButton $run aria-label="文件夹">
          <svg width="22" height="20" viewBox="0 0 22 20">
            <path d="M0 1h8l2 2h12v16H0z" fill="#f8d775" />
            <path d="M0 6h22v13H0z" fill="#fde79a" />
            <path d="M4 19v-8h14v8h-4v-4H8v4z" fill="#35a3dd" />
          </svg>
        </TaskButton>
        <TaskButton $run aria-label="广联达"><Swirl color="#1797f0" width={4} /></TaskButton>
        <TaskButton $run aria-label="安全浏览器">
          <svg width="22" height="22" viewBox="0 0 22 22">
            <circle cx="11" cy="11" r="9.500" fill="#5fc234" stroke="#dff5d3" />
            <path d="M6 11.500h10q0-5-5-5t-5 5q1 5 5 5 3 0 5-2" fill="none" stroke="#fff" strokeWidth={2.500} />
            <path d="M3 19Q1 10 12 3q7-3 8 0" fill="none" stroke="#3f9e1c" strokeWidth={1.500} />
          </svg>
        </TaskButton>
        <TaskButton $width={48} $run $on aria-label="钢筋算量"><Icon name="app" size={22} /></TaskButton>
        <TaskButton $width={39} $run aria-label="PDF">
          <svg width="23" height="23" viewBox="0 0 23 23">
            <rect x=".5" y=".5" width="22" height="22" rx="2" fill="#cf6a13" stroke="#999" />
            <text x="2" y="15" fontSize="9" fontWeight="bold" fontFamily="Liberation Sans, sans-serif" fill="#f5dcc0">PDF</text>
          </svg>
        </TaskButton>
        <DividerSlot><TaskDivider /></DividerSlot>
        <Tray>
          <Shortcuts>链接</Shortcuts>
          <TwoLines $width={66}>12%<br />CPU使用</TwoLines>
          <svg width="14" height="14"><path d="M1 10l6-6 6 6" fill="none" stroke="#fff" strokeWidth={1.500} /></svg>
          <svg width="16" height="14"><path d="M5.500 4.500h9v7h-9z" fill="none" stroke="#fff" /><path d="M7 6h6v4H7zM15 6h1v4h-1zM0 3h5v3H3v4H2V6H0zM1 1h1v2H1zM3 1h1v2H3z" fill="#fff" /></svg>
          <svg width="14" height="14"><path d="M1 12Q1 2 12 1M4 13q0-8 8-8M7 13q0-4 5-4" fill="none" stroke="#bbb" /><circle cx="11" cy="12" r="1.500" fill="#fff" /></svg>
          <svg width="17" height="14"><path d="M1 5h3l4-4v12L4 9H1zM10 4q2 3 0 6M12 3q3 4 0 8M14 1q4 6 0 12" fill="none" stroke="#ddd" /></svg>
          <svg width="22" height="14"><path d="M.5.5h21v12H.5z" fill="none" stroke="#fff" /><path d="M3 3.500h16M3 6.500h16" stroke="#fff" strokeDasharray="2 1" /><path d="M5 10h12" stroke="#fff" /></svg>
          <span>中</span>
          <SogouLogo size={17} />
          <TwoLines $width={72}>21:55<br />2018/5/5</TwoLines>
          <svg width="45" height="18"><path d="M4.500 1.500h15v12h-5l-2.500 3-2.500-3h-5z" fill="none" stroke="#fff" /></svg>
        </Tray>
      </Taskbar>
    </>
  );
}

const menus = ["文件(F)", "编辑(E)", "楼层(L)", "构件(N)", "绘图(D)", "修改(M)", "钢筋量(Q)", "视图(V)", "工具(T)", "云应用(Y)", "BIM应用(I)", "在线服务(S)", "帮助(H)", "版本号(B)"];

export default function App() {
  return (
    <Root>
      <GlobalStyle />
      <TitleBar>
        <Icon name="app" />
        <span>
          广联达<TitleLatin>BIM</TitleLatin>钢筋算量软件 <TitleLatin>GGJ2013 - [C:\Users\Administrator.PC-20141127NRHM\Desktop\</TitleLatin>白龙村<TitleLatin>-2018-02-02-19-24-35</TitleLatin>
        </span>
        <WindowButtons>
          <PlainButton aria-label="最小化"><svg width="12" height="12"><path d="M1 6.500h10" stroke="#888" /></svg></PlainButton>
          <PlainButton aria-label="还原"><svg width="12" height="12"><path d="M1.500 3.500h7v7h-7zM3.500 3V1.500h7v7H9" fill="none" stroke="#888" /></svg></PlainButton>
          <PlainButton aria-label="关闭"><svg width="12" height="12"><path d="M1 1l10 10M11 1L1 11" stroke="#888" /></svg></PlainButton>
        </WindowButtons>
      </TitleBar>
      <MenuRow>
        <Menus>
          {menus.map((m) => (
            <MenuButton key={m}>{m}</MenuButton>
          ))}
          <MenuButton><Icon name="changeDoc" />新建变更<Caret /></MenuButton>
          <MenuButton><Icon name="mascot" />广小二</MenuButton>
        </Menus>
        <NoticeBar>未使用的柱大样名称KZ..</NoticeBar>
        <AccountBar>
          <Icon name="user" />
          <span>13907298339</span>
          <Caret />
          <span>造价豆:0</span>
          <Gap />
          <FaBell size={14} color="#1e7ff0" />
          <More>»</More>
        </AccountBar>
      </MenuRow>
      <ToolRow>
        <Toolbar $width={149}>
          <PlainButton aria-label="新建"><Icon name="newDoc" /></PlainButton>
          <ToolButton aria-label="打开"><Icon name="folderOpen" /><Caret /></ToolButton>
          <PlainButton aria-label="保存"><Icon name="save" /></PlainButton>
          <Rule />
          <ToolButton aria-label="撤销"><Icon name="undo" /><Caret /></ToolButton>
          <More>»</More>
        </Toolbar>
        <Toolbar $width={547}>
          <ToolButton><Icon name="paint" />绘图</ToolButton>
          <ToolButton><Icon name="sigma" />汇总计算</ToolButton>
          <ToolButton><Icon name="cloudCheck" />云检查</ToolButton>
          <ToolButton $off><Icon name="alignTop" />平齐板顶</ToolButton>
          <ToolButton $off><Icon name="binoculars" />查找图元</ToolButton>
          <ToolButton $off><Icon name="glasses" />查看钢筋量</ToolButton>
          <ToolButton $off><Icon name="batch" />批量选择</ToolButton>
          <More>»</More>
        </Toolbar>
        <Toolbar $pad={1}>
          <Combo $width={60} $boxed>
            <Icon name="flat" />
            <select aria-label="视图模式"><option>二维</option></select>
            <Caret />
          </Combo>
          <ToolButton $off><Icon name="cube" />俯视<Caret /></ToolButton>
          <ToolButton $off><Icon name="orbit" />动态观察</ToolButton>
          <ToolButton $off><Icon name="partial3d" />局部三维</ToolButton>
          <Rule />
          <ToolButton $off><Icon name="fullScreen" />全屏</ToolButton>
          <ToolButton $off><Icon name="zoom" />缩放<Caret /></ToolButton>
          <ToolButton $off><Icon name="hand" />平移<Caret /></ToolButton>
          <ToolButton $off $tight><Icon name="rotate" />屏幕旋转<Caret /></ToolButton>
          <Rule />
          <ToolButton $off><Icon name="floors" />选择楼层</ToolButton>
          <More>»</More>
        </Toolbar>
      </ToolRow>
      <Workspace>
        <Navigation />
        <RightSide>
          <ComponentTools>
            <ToolButton $tight><Icon name="plusDoc" />新建<Caret /></ToolButton>
            <ToolButton><Icon name="cross" />删除</ToolButton>
            <ToolButton><Icon name="copy" />复制</ToolButton>
            <ToolButton><Icon name="rename" />重命名</ToolButton>
            <Rule />
            <FloorField>
              楼层
              <FloorCombo>
                <select><option>第6层</option></select>
                <Caret />
              </FloorCombo>
            </FloorField>
            <Rule />
            <ToolButton $tight><Icon name="sort" />排序<Caret /></ToolButton>
            <ToolButton $tight><Icon name="filter" />过滤<Caret /></ToolButton>
            <Rule />
            <ToolButton><Icon name="copyFrom" />从其他楼层复制构件</ToolButton>
            <ToolButton><Icon name="copyFrom" />复制构件到其他楼层</ToolButton>
            <Rule />
            <ToolButton $tight>查找<Caret /></ToolButton>
            <Rule />
            <ToolButton><Icon name="arrowUp" />上移</ToolButton>
            <ToolButton $off><Icon name="arrowDown" />下移</ToolButton>
          </ComponentTools>
          <Columns>
            <ComponentList />
            <Properties />
          </Columns>
        </RightSide>
      </Workspace>
      <BottomBars />
      <ImeBar>
        <span>中</span>
        <span>°,</span>
        <FaRegSmile size={16} />
        <FaMicrophone size={15} />
        <FaRegKeyboard size={17} />
        <svg width="17" height="16" viewBox="0 0 17 16"><circle cx="6" cy="4" r="3" fill="#a9bdd6" /><path d="M0 13q1-5 6-5h4v5z" fill="#a9bdd6" /><path d="M7.500 8.500h9v6h-9zM9 10.500h2M9 12.500h2M13 10.500h2M13 12.500h2" fill="#fff" stroke="#8ea9cc" /></svg>
        <FaTshirt size={15} />
        <FaWrench size={15} />
      </ImeBar>
      <ImeLogo><SogouLogo size={28} /></ImeLogo>
      <Badge>65</Badge>
    </Root>
  );
}
